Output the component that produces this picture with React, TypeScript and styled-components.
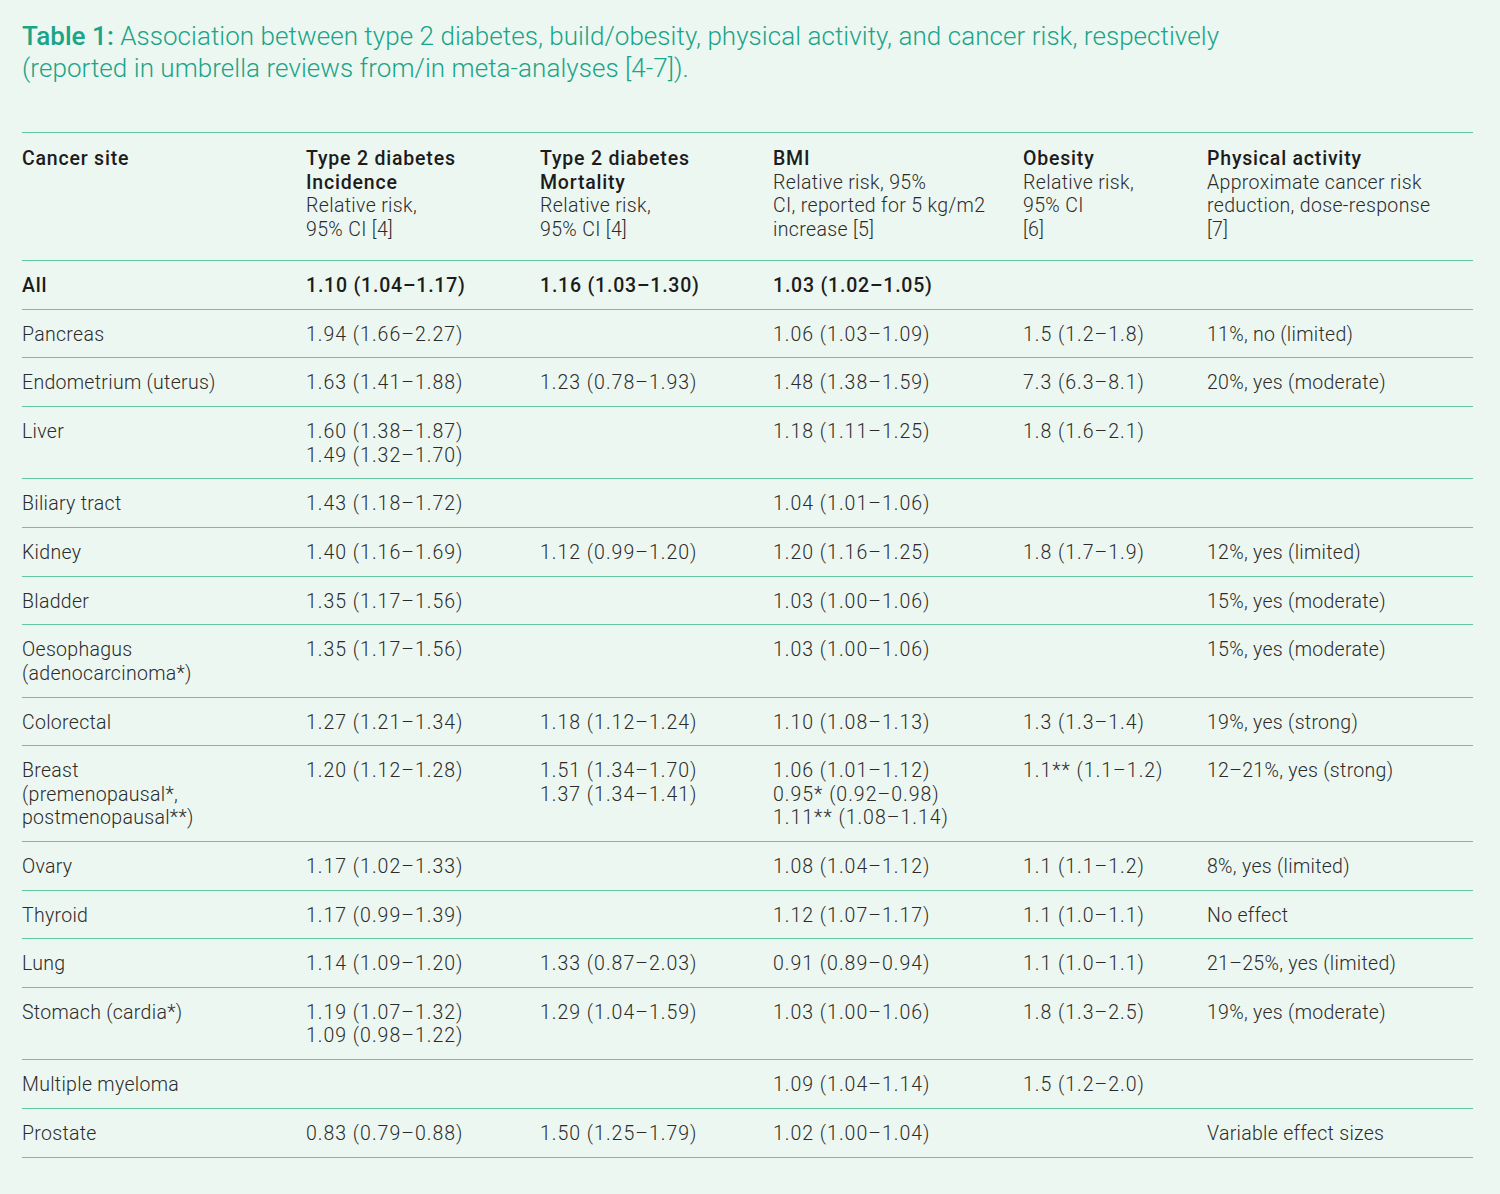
import styled, { createGlobalStyle } from "styled-components";

const GlobalStyle = createGlobalStyle`
  html, body {
    margin: 0;
    padding: 0;
    background: #edf7f1;
  }
  body {
    font-family: Roboto, "Liberation Sans", sans-serif;
    color: #2b2b2b;
  }
`;

const Page = styled.main`
  min-height: 1194px;
  padding: 20px 27px 0 22px;
  background: #edf7f1;
  box-sizing: border-box;
`;

const Caption = styled.h1`
  margin: 0 0 48px;
  font-size: 26px;
  line-height: 32px;
  font-weight: 300;
  color: #1aa488;
  letter-spacing: 0.05px;
`;

const CaptionLabel = styled.span`
  font-weight: 500;
`;

const Table = styled.table`
  width: 1451px;
  border-collapse: collapse;
  table-layout: fixed;
  border-top: 1px solid #63c7a6;
`;

const Row = styled.tr`
  border-bottom: 1px solid #63c7a6;
`;

const HeadCell = styled.th<{ $w: number }>`
  box-sizing: border-box;
  width: ${(p) => p.$w}px;
  text-align: left;
  vertical-align: top;
  padding: 14px 8px 19px 0;
  font-size: 19.5px;
  line-height: 23.5px;
  font-weight: 300;
  letter-spacing: 0.35px;
  color: #2b2b2b;
`;

const HeadTitle = styled.div`
  font-weight: 500;
  letter-spacing: 0.8px;
  color: #1c1c1c;
`;

const Cell = styled.td<{ $bold?: boolean; $num?: boolean }>`
  vertical-align: top;
  padding: 13px 8px 11.2px 0;
  font-size: 19.5px;
  line-height: 23.5px;
  font-weight: ${(p) => (p.$bold ? 500 : 300)};
  letter-spacing: ${(p) => (p.$bold ? "0.8px" : p.$num ? "1px" : "0.3px")};
  color: ${(p) => (p.$bold ? "#1c1c1c" : "#2b2b2b")};
`;

const columns = [
  { w: 284, title: ["Cancer site"], sub: [] as string[] },
  { w: 234, title: ["Type 2 diabetes", "Incidence"], sub: ["Relative risk,", "95% CI [4]"] },
  { w: 233, title: ["Type 2 diabetes", "Mortality"], sub: ["Relative risk,", "95% CI [4]"] },
  { w: 250, title: ["BMI"], sub: ["Relative risk, 95%", "CI, reported for 5 kg/m2", "increase [5]"] },
  { w: 184, title: ["Obesity"], sub: ["Relative risk,", "95% CI", "[6]"] },
  { w: 266, title: ["Physical activity"], sub: ["Approximate cancer risk", "reduction, dose-response", "[7]"] },
];

type Line = string[];
const rows: { cells: Line[]; bold?: boolean }[] = [
  { bold: true, cells: [["All"], ["1.10 (1.04–1.17)"], ["1.16 (1.03–1.30)"], ["1.03 (1.02–1.05)"], [], []] },
  { cells: [["Pancreas"], ["1.94 (1.66–2.27)"], [], ["1.06 (1.03–1.09)"], ["1.5 (1.2–1.8)"], ["11%, no (limited)"]] },
  { cells: [["Endometrium (uterus)"], ["1.63 (1.41–1.88)"], ["1.23 (0.78–1.93)"], ["1.48 (1.38–1.59)"], ["7.3 (6.3–8.1)"], ["20%, yes (moderate)"]] },
  { cells: [["Liver"], ["1.60 (1.38–1.87)", "1.49 (1.32–1.70)"], [], ["1.18 (1.11–1.25)"], ["1.8 (1.6–2.1)"], []] },
  { cells: [["Biliary tract"], ["1.43 (1.18–1.72)"], [], ["1.04 (1.01–1.06)"], [], []] },
  { cells: [["Kidney"], ["1.40 (1.16–1.69)"], ["1.12 (0.99–1.20)"], ["1.20 (1.16–1.25)"], ["1.8 (1.7–1.9)"], ["12%, yes (limited)"]] },
  { cells: [["Bladder"], ["1.35 (1.17–1.56)"], [], ["1.03 (1.00–1.06)"], [], ["15%, yes (moderate)"]] },
  { cells: [["Oesophagus", "(adenocarcinoma*)"], ["1.35 (1.17–1.56)"], [], ["1.03 (1.00–1.06)"], [], ["15%, yes (moderate)"]] },
  { cells: [["Colorectal"], ["1.27 (1.21–1.34)"], ["1.18 (1.12–1.24)"], ["1.10 (1.08–1.13)"], ["1.3 (1.3–1.4)"], ["19%, yes (strong)"]] },
  {
    cells: [
      ["Breast", "(premenopausal*,", "postmenopausal**)"],
      ["1.20 (1.12–1.28)"],
      ["1.51 (1.34–1.70)", "1.37 (1.34–1.41)"],
      ["1.06 (1.01–1.12)", "0.95* (0.92–0.98)", "1.11** (1.08–1.14)"],
      ["1.1** (1.1–1.2)"],
      ["12–21%, yes (strong)"],
    ],
  },
  { cells: [["Ovary"], ["1.17 (1.02–1.33)"], [], ["1.08 (1.04–1.12)"], ["1.1 (1.1–1.2)"], ["8%, yes (limited)"]] },
  { cells: [["Thyroid"], ["1.17 (0.99–1.39)"], [], ["1.12 (1.07–1.17)"], ["1.1 (1.0–1.1)"], ["No effect"]] },
  { cells: [["Lung"], ["1.14 (1.09–1.20)"], ["1.33 (0.87–2.03)"], ["0.91 (0.89–0.94)"], ["1.1 (1.0–1.1)"], ["21–25%, yes (limited)"]] },
  { cells: [["Stomach (cardia*)"], ["1.19 (1.07–1.32)", "1.09 (0.98–1.22)"], ["1.29 (1.04–1.59)"], ["1.03 (1.00–1.06)"], ["1.8 (1.3–2.5)"], ["19%, yes (moderate)"]] },
  { cells: [["Multiple myeloma"], [], [], ["1.09 (1.04–1.14)"], ["1.5 (1.2–2.0)"], []] },
  { cells: [["Prostate"], ["0.83 (0.79–0.88)"], ["1.50 (1.25–1.79)"], ["1.02 (1.00–1.04)"], [], ["Variable effect sizes"]] },
];

const Lines = ({ lines }: { lines: string[] }) => (
  <>
    {lines.map((l, i) => (
      <div key={i}>{l}</div>
    ))}
  </>
);

export default function App() {
  return (
    <Page>
      <GlobalStyle />
      <Caption>
        <CaptionLabel>Table 1:</CaptionLabel> Association between type 2 diabetes, build/obesity, physical activity, and
        cancer risk, respectively
        <br />
        (reported in umbrella reviews from/in meta-analyses [4-7]).
      </Caption>
      <Table>
        <thead>
          <Row>
            {columns.map((c, i) => (
              <HeadCell key={i} $w={c.w}>
                <HeadTitle>
                  <Lines lines={c.title} />
                </HeadTitle>
                <Lines lines={c.sub} />
              </HeadCell>
            ))}
          </Row>
        </thead>
        <tbody>
          {rows.map((r, i) => (
            <Row key={i}>
              {r.cells.map((c, j) => (
                <Cell key={j} $bold={r.bold} $num={j > 0 && j < 5}>
                  <Lines lines={c} />
                </Cell>
              ))}
            </Row>
          ))}
        </tbody>
      </Table>
    </Page>
  );
}
